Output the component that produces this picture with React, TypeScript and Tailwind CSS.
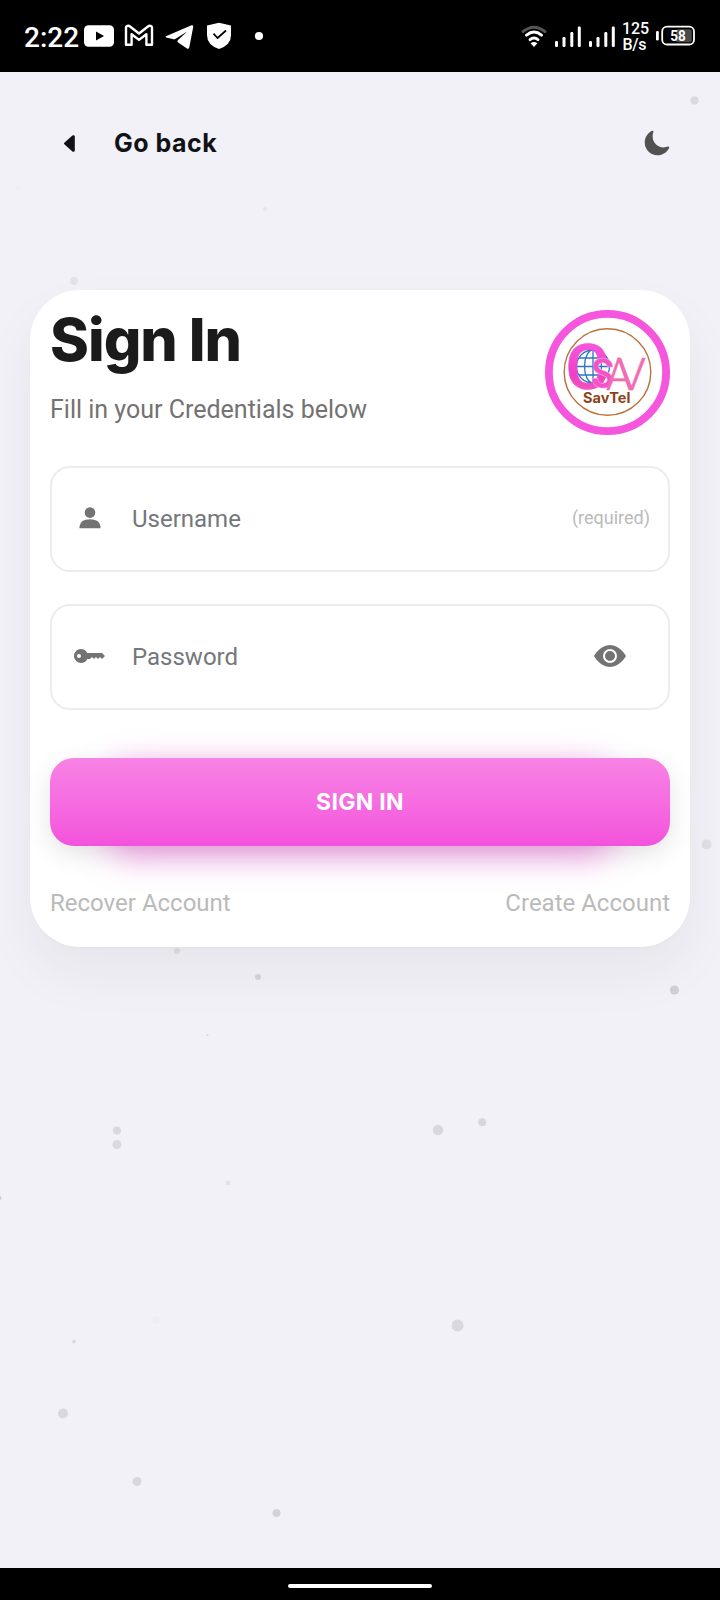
import { BsCaretLeftFill, BsEyeFill, BsKeyFill } from "react-icons/bs";
import { IoMoon } from "react-icons/io5";

const DOTS: [number, number, number, string][] = [
  [694.5, 100.5, 4.2, "#d9d9de"],
  [265, 209, 2, "#e6e6eb"],
  [74, 281, 4, "#e2e2e8"],
  [18, 188, 2, "#eeeef2"],
  [706.5, 844.5, 5, "#dfdfe4"],
  [177, 951, 3, "#dedee2"],
  [258, 977, 3, "#d6d6da"],
  [674.5, 990, 4.6, "#cfcfd4"],
  [207.5, 1035, 1.1, "#d8d8dc"],
  [117, 1130.6, 4.1, "#d9d9dd"],
  [117, 1144.5, 4.5, "#dadade"],
  [438, 1130, 5.3, "#d9d9dd"],
  [482.3, 1122.3, 4, "#d7d7db"],
  [228, 1183, 2.3, "#e1e1e6"],
  [-1, 1198, 2.5, "#cfcfd3"],
  [156, 1320, 4, "#eeeef2"],
  [74, 1341.5, 1.9, "#dadade"],
  [457.6, 1325.6, 6, "#d9d9dd"],
  [63, 1413.5, 5.1, "#d9d9dd"],
  [137, 1481.5, 4.5, "#d8d8dc"],
  [276.5, 1513, 4, "#d3d3d7"],
];

function StatusIcons() {
  return (
    <svg width="636" height="72" viewBox="84 0 636 72" fill="#fff">
      <rect x="84" y="25.3" width="30" height="21.4" rx="4.500" />
      <path d="M96 31.6v9l8-4.5z" fill="#000" />
      <path
        d="M126 27.5v17.3h5.6V34.3l7.4 5.6 7.4-5.6v10.5h5.6V27.5c0-1.5-2.4-2.3-4-1l-9 7-9-7c-1.600-1.300-4-.5-4 1z"
        fill="none"
        stroke="#fff"
        strokeWidth="2.400"
        strokeLinejoin="round"
      />
      <path d="M166 36.300 191.500 25.300Q193.500 24.600 193.200 27L189.300 47.200Q188.700 49.600 186.600 48.200L177.800 42.200Q176.800 41.300 177.800 40.300L187.200 31.400 175.200 38.900Q174 39.500 172.600 39L166 37.400Q165 36.800 166 36.300z" />
      <path d="M219 22.800 231 25.600V35Q231 45 219 49Q207 45 207 35V25.600z" />
      <path d="M213.500 33.700 217.600 38 226 30.500" fill="none" stroke="#000" strokeWidth="1.700" />
      <circle cx="259" cy="36" r="4.100" />

      <g fill="none" stroke="#fff" strokeWidth="2.900" strokeLinecap="round">
        <path d="M523 31.500Q534 22.800 545 31.500" stroke="#555" />
        <path d="M526.500 35.200Q534 29 541.500 35.200" />
        <path d="M530 39.600Q534 36.400 538 39.600" />
      </g>
      <path d="M530.600 43.300Q534 40.800 537.400 43.300L534 47z" />
      {[555, 589].map((x) => (
        <g key={x}>
          <rect x={x} y="41" width="3" height="6" rx="1.200" />
          <rect x={x + 7.5} y="37" width="3" height="10" rx="1.200" />
          <rect x={x + 15.3} y="32" width="3" height="15" rx="1.200" />
          <rect x={x + 22.8} y="26.500" width="3" height="20.500" rx="1.200" />
        </g>
      ))}
      <text x="622" y="34" fontFamily="Roboto" fontWeight="500" fontSize="16" textLength="27">
        125
      </text>
      <text x="622.500" y="50" fontFamily="Roboto" fontWeight="500" fontSize="16" textLength="24">
        B/s
      </text>
      <rect x="656" y="31" width="2.800" height="9.500" rx="1.200" />
      <rect x="662.200" y="26.700" width="31.800" height="17.800" rx="4.800" fill="none" stroke="#fff" strokeWidth="1.800" />
      <rect x="676" y="29.200" width="15.800" height="13" rx="2" fill="#4a4a4a" />
      <text x="670.300" y="41.300" fontFamily="Roboto" fontWeight="700" fontSize="15.500" textLength="15.500" lengthAdjust="spacingAndGlyphs">
        58
      </text>
    </svg>
  );
}

function Logo() {
  return (
    <svg className="size-[125px] shrink-0" viewBox="545 310 125 125">
      <defs>
        <linearGradient id="pink" x1="0" y1="0" x2="0" y2="1">
          <stop offset="0" stopColor="#f95fe6" />
          <stop offset="0.600" stopColor="#ee3fc6" />
          <stop offset="1" stopColor="#f768b0" />
        </linearGradient>
      </defs>
      <circle cx="607.500" cy="372.500" r="58.600" fill="#fff" stroke="#f556dd" strokeWidth="7.800" />
      <circle cx="607.500" cy="372" r="43.300" fill="none" stroke="#b9733a" strokeWidth="1.400" />
      <g fill="none" stroke="#2f74c0" strokeWidth="1.300">
        <circle cx="593" cy="366.500" r="16.500" />
        <ellipse cx="593" cy="366.500" rx="8.500" ry="16.500" />
        <path d="M593 350v33M576.500 366.500h33M579 358h28M579 375h28" />
      </g>
      <g fontFamily="Roboto, sans-serif">
        <text x="565.500" y="389" fontWeight="500" fontSize="63" fill="url(#pink)" stroke="#f04fce" strokeWidth="0.600" textLength="43" lengthAdjust="spacingAndGlyphs">
          C
        </text>
        <text x="591" y="387.500" fontWeight="700" fontSize="42" fill="#f253c8" stroke="#fbb0e6" strokeWidth="0.500" textLength="23" lengthAdjust="spacingAndGlyphs">
          S
        </text>
        <text x="606" y="389.500" fontWeight="300" fontSize="44" fill="#f26cb4" stroke="#f26cb4" strokeWidth="0.500" textLength="26" lengthAdjust="spacingAndGlyphs">
          A
        </text>
        <text x="617" y="389.500" fontWeight="300" fontSize="44" fill="#f26cb4" stroke="#f26cb4" strokeWidth="0.500" textLength="29" lengthAdjust="spacingAndGlyphs">
          V
        </text>
        <text x="583" y="402.800" fontFamily="Inter, sans-serif" fontWeight="700" fontSize="14.500" fill="#8a4318" textLength="47.500">
          SavTel
        </text>
      </g>
    </svg>
  );
}

function PersonIcon() {
  return (
    <svg width="22" height="22" viewBox="0 0 22 22" fill="#737373">
      <circle cx="11" cy="5.600" r="5.300" />
      <path d="M.5 19.500Q1.200 12.300 11 12.300Q20.800 12.300 21.500 19.500V21.300H.5z" />
    </svg>
  );
}

export default function App() {
  return (
    <div className="relative isolate flex h-[1600px] w-[720px] flex-col overflow-hidden bg-[#f1f1f7] font-[Roboto,sans-serif]">
      <svg className="absolute inset-0 -z-10" width="720" height="1600">
        {DOTS.map(([x, y, r, fill]) => (
          <circle key={`${x}-${y}`} cx={x} cy={y} r={r} fill={fill} />
        ))}
      </svg>

      <div className="flex h-[72px] shrink-0 items-center bg-black text-white">
        <span className="w-[84px] shrink-0 pt-[3px] pl-[24px] text-[28px] leading-8 font-medium">2:22</span>
        <StatusIcons />
      </div>

      <header className="flex h-[142px] shrink-0 items-center justify-between pr-[49px] pl-[59px]">
        <button className="flex items-center gap-[32px] text-[#111216]">
          <BsCaretLeftFill className="size-[23px]" />
          <span className="font-[Inter,sans-serif] text-[25px] leading-8 font-bold tracking-[0.5px]">Go back</span>
        </button>
        <IoMoon className="size-[28px] text-[#525252]" />
      </header>

      <main className="mx-[30px] mt-[76px] flex h-[657px] shrink-0 flex-col rounded-[50px] bg-white px-5 pt-5 shadow-[0_26px_54px_rgba(30,30,40,0.055),0_2px_3px_rgba(30,30,40,0.02)]">
        <div className="flex h-[125px] justify-between">
          <div>
            <h1 className="font-[Inter,sans-serif] text-[59px] leading-[60px] font-extrabold tracking-[-1px] text-[#1b1b1b]">Sign In</h1>
            <p className="mt-[24px] text-[25px] leading-8 whitespace-nowrap text-[#737373]">Fill in your Credentials below</p>
          </div>
          <Logo />
        </div>

        <div className="mt-[31px] flex h-[106px] items-center rounded-[20px] border-2 border-[#ededed] pr-[18px]">
          <div className="flex w-[76px] justify-center pb-[2px]">
            <PersonIcon />
          </div>
          <span className="flex-1 pl-[4px] text-[24px] leading-8 text-[#74777b]">Username</span>
          <span className="pb-[2px] text-[18px] leading-6 text-[#bababa]">(required)</span>
        </div>

        <div className="mt-8 flex h-[106px] items-center rounded-[20px] border-2 border-[#ededed] pr-[42px]">
          <div className="flex w-[76px] justify-center pr-px pb-[2px]">
            <BsKeyFill className="size-[32px] text-[#737373]" />
          </div>
          <span className="flex-1 pl-[4px] text-[24px] leading-8 text-[#74777b]">Password</span>
          <BsEyeFill className="mb-[2px] size-[32px] text-[#737373]" />
        </div>

        <div className="relative isolate mt-12 h-[88px]">
          <div className="absolute inset-x-[56px] top-[9px] -z-10 h-[88px] rounded-[24px] bg-[#ee5ada]/60 blur-[17px]" />
          <button className="h-full w-full rounded-[24px] bg-linear-to-b from-[#f783e5] to-[#f352dc] font-[Inter,sans-serif] text-[23px] font-bold tracking-[0.3px] text-white shadow-[0_8px_26px_rgba(0,0,0,0.11)]">
            SIGN IN
          </button>
        </div>

        <div className="mt-[41px] flex justify-between text-[24px] leading-8 text-[#bababa]">
          <a>Recover Account</a>
          <a>Create Account</a>
        </div>
      </main>

      <div className="mt-auto flex h-8 shrink-0 items-center justify-center bg-black pt-1">
        <div className="h-1 w-36 rounded-full bg-white" />
      </div>
    </div>
  );
}
